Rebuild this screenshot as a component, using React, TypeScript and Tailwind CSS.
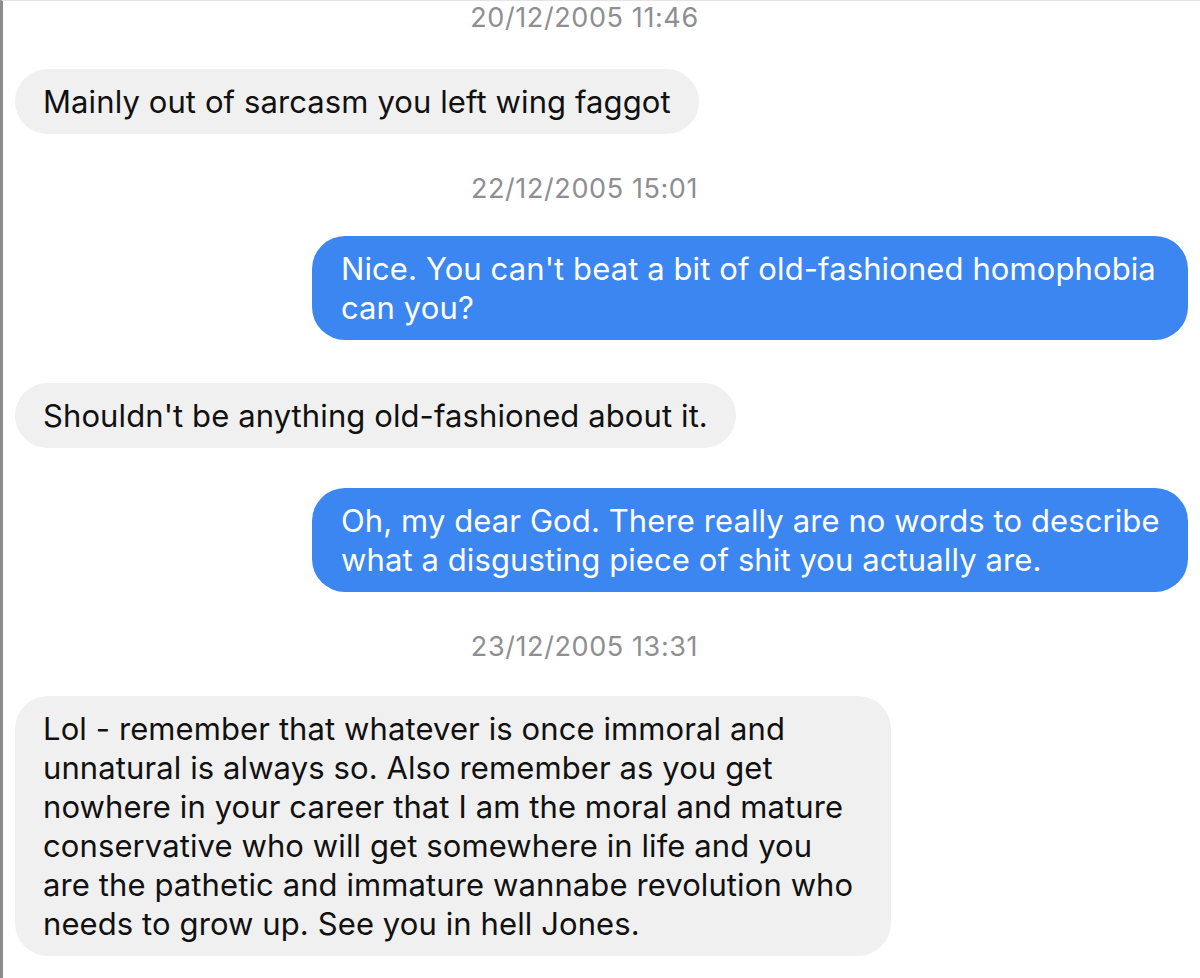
export default function App() {
  const font = { fontFamily: 'Inter, "Liberation Sans", sans-serif' }

  return (
    <div
      className="w-[1200px] h-[978px] overflow-hidden bg-white border-l-[3px] border-[#8c8c8c] border-t border-t-[#e4e4e4] text-[31px] leading-[39px] tracking-[0.1px] text-[#111]"
      style={font}
    >
      <Stamp className="mt-[2px]">20/12/2005 11:46</Stamp>

      <Incoming className="mt-[36px]">Mainly out of sarcasm you left wing faggot</Incoming>

      <Stamp className="mt-[40px]">22/12/2005 15:01</Stamp>

      <Outgoing className="mt-[32px]">
        Nice. You can't beat a bit of old-fashioned homophobia can you?
      </Outgoing>

      <Incoming className="mt-[43px]">Shouldn't be anything old-fashioned about it.</Incoming>

      <Outgoing className="mt-[40px]">
        Oh, my dear God. There really are no words to describe what a disgusting piece of shit you
        actually are.
      </Outgoing>

      <Stamp className="mt-[40px]">23/12/2005 13:31</Stamp>

      <Incoming className="mt-[34px]">
        Lol - remember that whatever is once immoral and unnatural is always so. Also remember as
        you get nowhere in your career that I am the moral and mature conservative who will get
        somewhere in life and you are the pathetic and immature wannabe revolution who needs to
        grow up. See you in hell Jones.
      </Incoming>
    </div>
  )
}

function Stamp({ children, className = '' }: { children: React.ReactNode; className?: string }) {
  return (
    <div
      className={`w-[1163px] text-center text-[27px] leading-[30px] tracking-[0.6px] text-[#8e8e93] ${className}`}
    >
      {children}
    </div>
  )
}

function Incoming({ children, className = '' }: { children: React.ReactNode; className?: string }) {
  return (
    <div className={`flex justify-start pl-[12px] ${className}`}>
      <div className="max-w-[876px] rounded-[33px] bg-[#f0f0f0] px-[28px] py-[13px]">{children}</div>
    </div>
  )
}

function Outgoing({ children, className = '' }: { children: React.ReactNode; className?: string }) {
  return (
    <div className={`flex justify-end pr-[12px] ${className}`}>
      <div className="w-[876px] rounded-[33px] bg-[#3b86f1] pl-[29px] pr-[18px] py-[13px] text-white">
        {children}
      </div>
    </div>
  )
}
